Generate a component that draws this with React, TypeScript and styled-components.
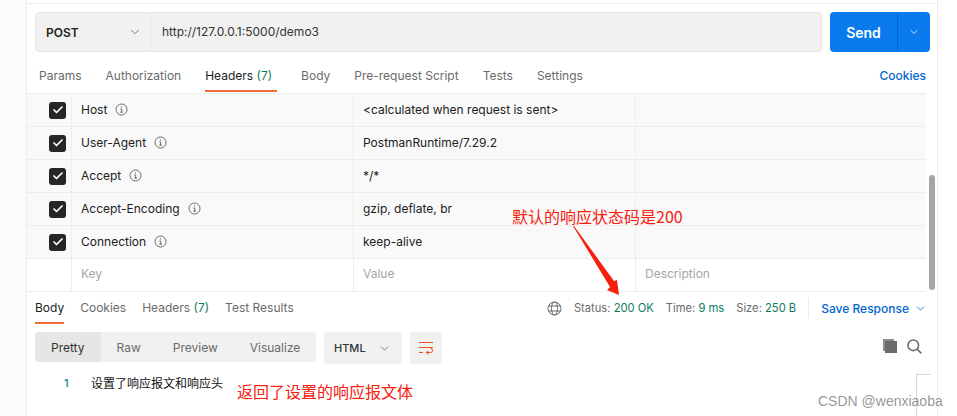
import styled, { createGlobalStyle } from "styled-components";
import { Check, ChevronDown } from "lucide-react";

const headers = [
    { key: "Host", value: "<calculated when request is sent>" },
    { key: "User-Agent", value: "PostmanRuntime/7.29.2" },
    { key: "Accept", value: "*/*" },
    { key: "Accept-Encoding", value: "gzip, deflate, br" },
    { key: "Connection", value: "keep-alive" },
];

const requestTabs = ["Params", "Authorization", "Headers", "Body", "Pre-request Script", "Tests", "Settings"];
const viewModes = ["Pretty", "Raw", "Preview", "Visualize"];

const InfoIcon = () => (
    <svg width="13" height="13" viewBox="0 0 13 13" fill="none" stroke="#6b6b6b">
        <circle cx="6.5" cy="6.5" r="5.5" />
        <path d="M5.3 6h1.4v3M5.2 9.2h2.8" />
        <path d="M6.5 3.4v1.2" />
    </svg>
);

const GlobeIcon = () => (
    <svg width="15" height="15" viewBox="0 0 15 15" fill="none" stroke="#6b6b6b" strokeWidth="1">
        <circle cx="7.5" cy="7.5" r="6.5" />
        <ellipse cx="7.5" cy="7.5" rx="3" ry="6.5" />
        <path d="M1.6 5h11.8M1.6 10h11.8" />
    </svg>
);

const WrapIcon = () => (
    <svg width="14" height="13" viewBox="0 0 14 13" fill="none" stroke="#e8501f" strokeWidth="1">
        <path d="M0 .5h14M0 5.5h14M0 10.5h4" />
        <path d="M7 10.5h4.6a1.9 1.9 0 0 0 0-4" />
        <path d="M9.4 8.8l-2.2 1.8 2.2 1.8" />
    </svg>
);

const CopyIcon = () => (
    <svg width="14" height="14" viewBox="0 0 14 14">
        <path d="M0 0h11v2H2v10H0z" fill="#8f8f8f" />
        <rect x="2" y="2" width="12" height="12" fill="#6b6b6b" />
    </svg>
);

const SearchIcon = () => (
    <svg width="15" height="15" viewBox="0 0 15 15" fill="none" stroke="#6b6b6b" strokeWidth="1.6">
        <circle cx="6.3" cy="6.3" r="5.3" />
        <path d="M10.2 10.2l4.2 4.2" />
    </svg>
);

export default function App() {
    return (
        <>
            <GlobalStyle />
            <Page>
                <SideStrip />
                <Main>
                    <RequestBar>
                        <UrlGroup>
                            <MethodSelect>
                                <span>POST</span>
                                <ChevronDown size={14} strokeWidth={1.25} color="#555" />
                            </MethodSelect>
                            <UrlText>http://127.0.0.1:5000/demo3</UrlText>
                        </UrlGroup>
                        <SendGroup>
                            <SendLabel>Send</SendLabel>
                            <SendArrow>
                                <ChevronDown size={12} strokeWidth={1.5} color="#fff" />
                            </SendArrow>
                        </SendGroup>
                    </RequestBar>

                    <RequestTabs>
                        <TabList $gap={24}>
                            {requestTabs.map((t) => (
                                <RequestTab key={t} $active={t === "Headers"} $wide={t === "Headers"}>
                                    {t}
                                    {t === "Headers" && <Count> (7)</Count>}
                                </RequestTab>
                            ))}
                        </TabList>
                        <BlueLink>Cookies</BlueLink>
                    </RequestTabs>

                    <TableArea>
                        <HeaderTable>
                            {headers.map((h) => (
                                <Row key={h.key} $filled>
                                    <CheckCell>
                                        <CheckBox>
                                            <Check size={12} strokeWidth={3.5} color="#fff" />
                                        </CheckBox>
                                    </CheckCell>
                                    <Cell>
                                        {h.key}
                                        <InfoIcon />
                                    </Cell>
                                    <Cell>{h.value}</Cell>
                                    <Cell />
                                </Row>
                            ))}
                            <Row>
                                <CheckCell />
                                <Cell $placeholder>Key</Cell>
                                <Cell $placeholder>Value</Cell>
                                <Cell $placeholder>Description</Cell>
                            </Row>
                        </HeaderTable>
                        <Scrollbar />
                    </TableArea>

                    <ResponseBar>
                        <TabList $gap={16}>
                            <ResponseTab $active>Body</ResponseTab>
                            <ResponseTab>Cookies</ResponseTab>
                            <ResponseTab>Headers<Count> (7)</Count></ResponseTab>
                            <ResponseTab>Test Results</ResponseTab>
                        </TabList>
                        <ResponseMeta>
                            <GlobeIcon />
                            <MetaGroup>
                                <MetaItem>Status: <b>200 OK</b></MetaItem>
                                <MetaItem>Time: <b>9 ms</b></MetaItem>
                                <MetaItem>Size: <b>250 B</b></MetaItem>
                            </MetaGroup>
                            <SaveResponse>
                                <BlueLink>Save Response</BlueLink>
                                <ChevronDown size={13} strokeWidth={1.5} color="#0265d2" />
                            </SaveResponse>
                        </ResponseMeta>
                    </ResponseBar>

                    <ResponseTools>
                        <Segments>
                            {viewModes.map((m) => (
                                <Segment key={m} $active={m === "Pretty"}>{m}</Segment>
                            ))}
                        </Segments>
                        <FormatSelect>
                            <span>HTML</span>
                            <ChevronDown size={13} strokeWidth={1.25} color="#555" />
                        </FormatSelect>
                        <WrapButton><WrapIcon /></WrapButton>
                        <ToolIcons>
                            <CopyIcon />
                            <SearchIcon />
                        </ToolIcons>
                    </ResponseTools>

                    <CodeLine>
                        <LineNumber>1</LineNumber>
                        <CodeText>设置了响应报文和响应头</CodeText>
                    </CodeLine>
                    <Minimap />
                </Main>

                <StatusNote>默认的响应状态码是200</StatusNote>
                <BodyNote>返回了设置的响应报文体</BodyNote>
                <ArrowMark viewBox="0 0 48 70" width="48" height="70">
                    <path d="M1 0 L2 0 L42 55 L45 54 L47 69 L35 64 L38 61 Z" fill="#f5200e" />
                </ArrowMark>
                <Watermark>CSDN @wenxiaoba</Watermark>
            </Page>
        </>
    );
}

const GlobalStyle = createGlobalStyle`
    html, body {
        margin: 0;
        padding: 0;
        background: #fff;
    }

    body {
        font-family: Inter, "Noto Sans CJK SC", sans-serif;
        font-size: 12px;
        color: #212121;
    }
`;

const Page = styled.div`
    position: relative;
    display: flex;
    width: 957px;
    height: 416px;
    overflow: hidden;
`;

const SideStrip = styled.div`
    width: 26px;
    background: #fbfbfb;
    border-right: 1px solid #ededed;
`;

const Main = styled.div`
    position: relative;
    width: 910px;
    border-right: 1px solid #ededed;
    display: flex;
    flex-direction: column;
    padding-top: 3px;

    &::before {
        content: "";
        display: block;
        height: 1px;
        background: #ededed;
    }
`;

const RequestBar = styled.div`
    display: flex;
    gap: 8px;
    margin: 8px 0 0 8px;
`;

const UrlGroup = styled.div`
    display: flex;
    width: 787px;
    height: 40px;
    box-sizing: border-box;
    background: #f1f1f1;
    border: 1px solid #e6e6e6;
    border-radius: 4px;
`;

const MethodSelect = styled.div`
    display: flex;
    align-items: center;
    justify-content: space-between;
    width: 115px;
    box-sizing: border-box;
    padding: 0 8px 0 10px;
    border-right: 1px solid #e6e6e6;
    font-weight: 600;
    color: #212121;
`;

const UrlText = styled.div`
    display: flex;
    align-items: center;
    padding: 0 0 2px 11px;
    color: #333;
`;

const SendGroup = styled.div`
    display: flex;
    width: 100px;
    height: 40px;
    background: #097bed;
    border-radius: 4px;
    color: #fff;
`;

const SendLabel = styled.div`
    display: flex;
    align-items: center;
    justify-content: center;
    width: 67px;
    font-size: 14px;
    font-weight: 600;
`;

const SendArrow = styled.div`
    display: flex;
    align-items: center;
    justify-content: center;
    flex: 1;
    border-left: 1px solid #0265d2;
`;

const RequestTabs = styled.div`
    display: flex;
    align-items: stretch;
    justify-content: space-between;
    width: 899px;
    height: 40px;
    margin-bottom: 1px;
    padding-left: 12px;
    box-sizing: border-box;
`;

const TabList = styled.div<{ $gap: number }>`
    display: flex;
    gap: ${(p) => p.$gap}px;
`;

const BaseTab = styled.div<{ $active?: boolean }>`
    display: flex;
    align-items: center;
    white-space: pre;
    box-sizing: border-box;
    color: ${(p) => (p.$active ? "#212121" : "#6b6b6b")};
    border-bottom: 2px solid ${(p) => (p.$active ? "#f26b3a" : "transparent")};
`;

const RequestTab = styled(BaseTab)<{ $wide?: boolean }>`
    height: 40px;
    padding-top: 8px;
    padding-right: ${(p) => (p.$wide ? "5px" : "0")};
`;

const ResponseTab = styled(BaseTab)`
    height: 32px;
`;

const Count = styled.span`
    color: #0c7b5f;
`;

const BlueLink = styled.div`
    display: flex;
    align-items: center;
    padding-top: 6px;
    color: #0265d2;
    font-weight: 500;
`;

const TableArea = styled.div`
    display: flex;
`;

const HeaderTable = styled.div`
    width: 899px;
    border-top: 1px solid #ededed;
`;

const Row = styled.div<{ $filled?: boolean }>`
    display: grid;
    grid-template-columns: 45px 282px 282px 1fr;
    height: 33px;
    box-sizing: border-box;
    border-bottom: 1px solid #ededed;
    background: ${(p) => (p.$filled ? "#f9f9f9" : "#fff")};
`;

const CheckCell = styled.div`
    display: flex;
    align-items: center;
    padding-left: 22px;
    border-right: 1px solid #ededed;
`;

const CheckBox = styled.div`
    display: flex;
    align-items: center;
    justify-content: center;
    flex: none;
    width: 17px;
    height: 17px;
    border-radius: 3px;
    background: #262626;
`;

const Cell = styled.div<{ $placeholder?: boolean }>`
    display: flex;
    align-items: center;
    gap: 8px;
    padding: 0 0 ${(p) => (p.$placeholder ? "4px" : "2px")} 9px;
    color: ${(p) => (p.$placeholder ? "#a6a6a6" : "#212121")};
    border-right: 1px solid #ededed;

    &:last-child {
        border-right: 0;
    }
`;

const Scrollbar = styled.div`
    align-self: flex-end;
    width: 6px;
    height: 115px;
    margin: 0 0 2px 3px;
    border-radius: 3px;
    background: #a6a6a6;
`;

const ResponseBar = styled.div`
    display: flex;
    justify-content: space-between;
    align-items: flex-start;
    height: 40px;
    padding: 0 10px 0 8px;
    box-sizing: border-box;
`;

const ResponseMeta = styled.div`
    display: flex;
    align-items: center;
    height: 32px;
    gap: 12px;
`;

const MetaGroup = styled.div`
    display: flex;
    gap: 12px;
    height: 20px;
    align-items: center;
    padding-right: 12px;
    border-right: 1px solid #ededed;
    font-size: 11.2px;
`;

const MetaItem = styled.span`
    color: #6b6b6b;

    b {
        font-weight: 400;
        color: #0c7b5f;
    }
`;

const SaveResponse = styled.div`
    display: flex;
    align-items: center;
    gap: 5px;

    ${BlueLink} {
        padding-top: 0;
    }
`;

const ResponseTools = styled.div`
    display: flex;
    align-items: flex-start;
    gap: 8px;
    padding: 0 0 0 8px;
    width: 899px;
    box-sizing: border-box;
`;

const Segments = styled.div`
    display: flex;
    height: 30px;
    width: 281px;
    background: #f1f1f1;
    border-radius: 4px;
    overflow: hidden;
`;

const Segment = styled.div<{ $active?: boolean }>`
    display: flex;
    align-items: center;
    padding: 0 16px;
    color: ${(p) => (p.$active ? "#333" : "#6b6b6b")};
    background: ${(p) => (p.$active ? "#e6e6e6" : "transparent")};
`;

const FormatSelect = styled.div`
    display: flex;
    align-items: center;
    justify-content: space-between;
    width: 78px;
    height: 32px;
    box-sizing: border-box;
    padding: 0 11px 0 10px;
    background: #f1f1f1;
    border-radius: 4px;
    font-size: 11px;
    font-weight: 500;
    color: #333;
`;

const WrapButton = styled.div`
    display: flex;
    align-items: center;
    justify-content: center;
    width: 32px;
    height: 32px;
    background: #f1f1f1;
    border-radius: 4px;
`;

const ToolIcons = styled.div`
    display: flex;
    align-items: center;
    gap: 10px;
    height: 28px;
    margin-left: auto;
    margin-right: 4px;
`;

const CodeLine = styled.div`
    display: flex;
    align-items: center;
    margin-top: 10px;
    padding-left: 37px;
`;

const LineNumber = styled.span`
    color: #177ea0;
    font-size: 11px;
    font-weight: 500;
    width: 27px;
`;

const CodeText = styled.span`
    font-family: "Noto Sans CJK SC", sans-serif;
    font-size: 12px;
    color: #111;
`;

const Minimap = styled.div`
    position: absolute;
    left: 889px;
    top: 374px;
    width: 14px;
    height: 42px;
    border-top: 1px solid #d9d9d9;
    border-left: 1px solid #d9d9d9;
`;

const StatusNote = styled.div`
    position: absolute;
    left: 512px;
    top: 205px;
    font-family: "Noto Sans CJK SC", sans-serif;
    font-size: 16px;
    line-height: 22px;
    color: #f5200e;
`;

const BodyNote = styled(StatusNote)`
    left: 237px;
    top: 380px;
`;

const ArrowMark = styled.svg`
    position: absolute;
    left: 572px;
    top: 226px;
`;

const Watermark = styled.div`
    position: absolute;
    left: 818px;
    top: 392px;
    font-family: "Liberation Sans", sans-serif;
    font-size: 14px;
    line-height: 18px;
    color: rgba(90, 90, 90, 0.65);
`;
